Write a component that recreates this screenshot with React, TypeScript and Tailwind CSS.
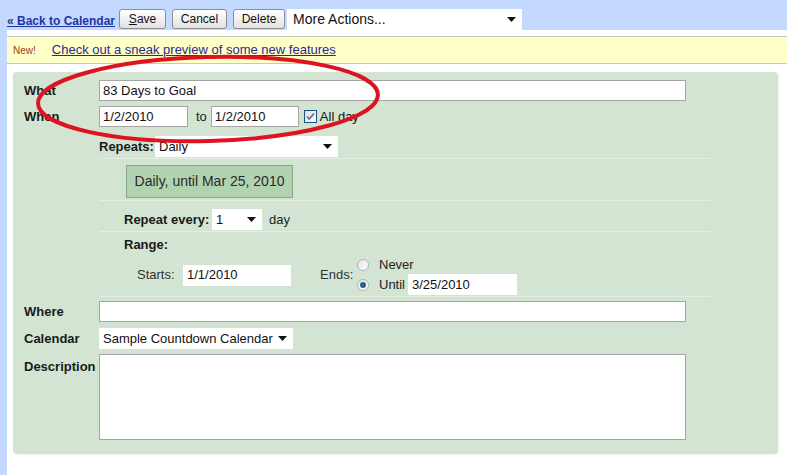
import React from "react";

const font = { fontFamily: '"Liberation Sans", Arial, sans-serif' };

function Arrow() {
  return (
    <svg width="9" height="5" viewBox="0 0 9 5" className="shrink-0">
      <path d="M0 0h9L4.5 5z" fill="#111" />
    </svg>
  );
}

function Select({ value, className }: { value: string; className: string }) {
  return (
    <div className={`flex h-[21px] items-center justify-between bg-white pl-[4px] pr-[6px] text-[13px] text-[#111] ${className}`}>
      <span className="truncate">{value}</span>
      <Arrow />
    </div>
  );
}

function Field({ value, className }: { value?: string; className: string }) {
  return (
    <div className={`flex h-[21px] items-center border border-[#a5a5a5] bg-white px-[3px] text-[13px] text-[#111] ${className}`}>
      {value}
    </div>
  );
}

function Button({ children, w }: { children: React.ReactNode; w: string }) {
  return (
    <div
      className={`flex h-[20px] ${w} items-center justify-center rounded-[3px] border border-[#8e8e8e] bg-gradient-to-b from-white to-[#e2e2e2] text-[12px] text-[#111]`}
    >
      {children}
    </div>
  );
}

function Label({ children, className = "" }: { children: React.ReactNode; className?: string }) {
  return <div className={`w-[75px] shrink-0 text-[13px] font-bold text-[#1a1a1a] ${className}`}>{children}</div>;
}

function Radio({ checked }: { checked?: boolean }) {
  return (
    <div className="flex h-[12px] w-[12px] items-center justify-center rounded-full border border-[#a9b8c6] bg-gradient-to-br from-[#e4e4e4] to-white">
      {checked && <div className="h-[6px] w-[6px] rounded-full bg-[#2f5f8f]" />}
    </div>
  );
}

export default function App() {
  return (
    <div className="relative h-[475px] w-[787px] overflow-hidden bg-[#c3d9ff]" style={font}>
      {/* top bar */}
      <div className="flex h-[30px] items-start gap-[6px] pl-[7px] pt-[9px]">
        <a className="mr-[-2px] mt-[3px] text-[12px] font-bold text-[#1f35a3] underline">« Back to Calendar</a>
        <Button w="w-[47px]">
          <span>
            <span className="underline">S</span>ave
          </span>
        </Button>
        <Button w="w-[55px]">Cancel</Button>
        <Button w="w-[52px]">Delete</Button>
        <Select value="More Actions..." className="-ml-[4px] h-[20px] w-[235px] pl-[6px] pr-[4px] text-[14px]" />
      </div>

      {/* content */}
      <div className="ml-[7px] h-[445px] bg-white pt-[6px]">
        <div className="flex h-[28px] items-center border-y border-[#c9c9c0] bg-[#ffffc8] pl-[6px]">
          <span className="mr-[16px] text-[10px] text-[#a03c14]">New!</span>
          <a className="text-[13px] text-[#2b2b86] underline">Check out a sneak preview of some new features</a>
        </div>

        <div className="ml-[6px] mr-[10px] mt-[8px] rounded-[3px] bg-[#d3e5d2] pb-[13px] pl-[11px] pt-[8px] shadow-[1px_1px_2px_rgba(0,0,0,0.18)]">
          {/* What */}
          <div className="flex items-center">
            <Label>What</Label>
            <Field value="83 Days to Goal" className="w-[587px]" />
          </div>
          {/* When */}
          <div className="mt-[5px] flex items-center">
            <Label>When</Label>
            <Field value="1/2/2010" className="w-[89px]" />
            <span className="ml-[8px] mr-[4px] text-[13px] text-[#222]">to</span>
            <Field value="1/2/2010" className="w-[88px]" />
            <div className="ml-[5px] flex h-[13px] w-[13px] items-center justify-center border border-[#1c5180] bg-gradient-to-br from-[#dcdcdc] to-white">
              <svg width="9" height="9" viewBox="0 0 9 9">
                <path d="M1 4.5l2.3 2.5L8 1.5" fill="none" stroke="#5a6fb0" strokeWidth="1.8" />
              </svg>
            </div>
            <span className="ml-[3px] text-[13px] text-[#111]">All day</span>
          </div>

          {/* recurrence */}
          <div className="ml-[75px] mt-[9px] w-[611px]">
            <div className="flex items-center border-b border-[#e3efe2] pb-[1px]">
              <span className="w-[56px] text-[13px] font-bold text-[#1a1a1a]">Repeats:</span>
              <Select value="Daily" className="w-[183px]" />
            </div>
            <div className="border-b border-[#e3efe2] pb-[2px] pt-[6px]">
              <div className="ml-[27px] flex h-[33px] w-[167px] items-center justify-center border border-[#86a985] bg-[#b2d3b0] text-[14px] text-[#2a2a2a]">
                Daily, until Mar 25, 2010
              </div>
            </div>
            <div className="flex items-center border-b border-[#e3efe2] pb-[1px] pl-[25px] pt-[8px]">
              <span className="w-[88px] text-[13px] font-bold text-[#1a1a1a]">Repeat every:</span>
              <Select value="1" className="w-[50px]" />
              <span className="ml-[7px] text-[13px] text-[#222]">day</span>
            </div>
            <div className="border-b border-[#e3efe2] pb-[1px] pl-[25px] pt-[5px]">
              <div className="h-[16px] text-[13px] font-bold leading-[16px] text-[#1a1a1a]">Range:</div>
              <div className="mt-[2px] flex items-center">
                <span className="ml-[13px] w-[46px] text-[13px] text-[#333]">Starts:</span>
                <div className="flex h-[21px] w-[108px] items-center bg-white px-[4px] text-[13px] text-[#111]">1/1/2010</div>
                <span className="ml-[29px] w-[37px] text-[13px] text-[#333]">Ends:</span>
                <div className="flex flex-col">
                  <div className="flex h-[19px] items-center">
                    <Radio />
                    <span className="ml-[10px] text-[13px] text-[#222]">Never</span>
                  </div>
                  <div className="flex h-[21px] items-center">
                    <Radio checked />
                    <span className="ml-[10px] w-[29px] text-[13px] text-[#222]">Until</span>
                    <div className="flex h-[21px] w-[109px] items-center bg-white px-[4px] text-[13px] text-[#111]">3/25/2010</div>
                  </div>
                </div>
              </div>
            </div>
          </div>

          {/* Where */}
          <div className="mt-[4px] flex items-center">
            <Label>Where</Label>
            <Field className="w-[587px]" />
          </div>
          {/* Calendar */}
          <div className="mt-[6px] flex items-center">
            <Label>Calendar</Label>
            <Select value="Sample Countdown Calendar" className="w-[194px]" />
          </div>
          {/* Description */}
          <div className="mt-[5px] flex items-start">
            <Label className="pt-[3px]">Description</Label>
            <div className="h-[86px] w-[587px] border border-[#a5a5a5] bg-white" />
          </div>
        </div>
      </div>

      {/* red annotation */}
      <svg className="pointer-events-none absolute left-0 top-0" width="787" height="475">
        <ellipse
          cx="208"
          cy="99"
          rx="170"
          ry="42"
          transform="rotate(-1.5 208 99)"
          fill="none"
          stroke="#dc1420"
          strokeWidth="4"
        />
      </svg>
    </div>
  );
}
